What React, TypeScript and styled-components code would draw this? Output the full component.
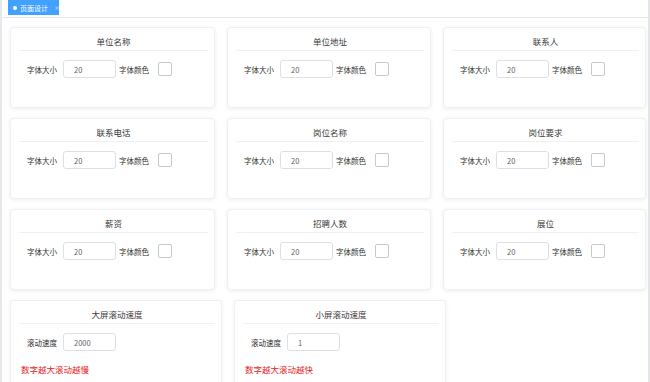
import styled, { createGlobalStyle } from 'styled-components';

const GlobalStyle = createGlobalStyle`
  * { box-sizing: border-box; }
  body {
    margin: 0;
    background: #fff;
    font-family: "Noto Sans CJK SC", "Noto Sans", sans-serif;
  }
`;

//Styled components
const Page = styled.div`
  width: 650px;
  height: 382px;
  overflow: hidden;
  border-left: 2px solid #e6e8eb;
  border-right: 2px solid #e3e5e8;
`;

const TabBar = styled.div`
  height: 18px;
  padding-left: 6px;
  border-bottom: 1px solid #e4e7ed;
  display: flex;
  align-items: flex-start;
`;

const Tab = styled.div`
  height: 15px;
  width: 51px;
  background: #42a0ff;
  color: #fff;
  font-size: 7px;
  white-space: nowrap;
  display: flex;
  align-items: center;
  padding-left: 5px;
  gap: 3px;

  i {
    width: 4px;
    height: 4px;
    border-radius: 50%;
    background: #fff;
    flex-shrink: 0;
  }

  b {
    font-weight: normal;
    margin-left: 3px;
    font-size: 6px;
    opacity: 0.8;
  }
`;

const Content = styled.div`
  padding: 9px 0 0 8px;
  display: flex;
  flex-direction: column;
  gap: 10px;
`;

const Grid = styled.div<{ $cols: string }>`
  display: grid;
  grid-template-columns: ${(p) => p.$cols};
  column-gap: 12px;
  row-gap: 10px;
`;

const Card = styled.div<{ $h: number }>`
  height: ${(p) => p.$h}px;
  background: #fff;
  border: 1px solid #eef0f4;
  border-radius: 4px;
  box-shadow: 0 1px 4px rgba(0, 0, 0, 0.07);
`;

const CardTitle = styled.div`
  margin: 0 6px 0 8px;
  height: 23px;
  border-bottom: 1px solid #eef0f3;
  display: flex;
  align-items: center;
  justify-content: center;
  font-size: 8.5px;
  color: #3a3a3a;
  padding-top: 3px;
`;

const FieldRow = styled.div`
  display: flex;
  align-items: center;
  padding: 9px 0 0 16px;
`;

const Label = styled.span`
  font-size: 7.5px;
  color: #333;
  width: 36px;
`;

const Input = styled.div`
  width: 53px;
  height: 18px;
  border: 1px solid #dcdfe6;
  border-radius: 3px;
  font-size: 7.5px;
  color: #606266;
  padding-left: 10px;
  display: flex;
  align-items: center;
`;

const ColorLabel = styled.span`
  font-size: 7.5px;
  color: #333;
  margin-left: 3px;
  width: 39px;
`;

const ColorBox = styled.div`
  width: 14px;
  height: 14px;
  border: 1px solid #c6c9cf;
  border-radius: 2px;
  background: #fff;
`;

const Hint = styled.div`
  color: #e62222;
  font-size: 8.5px;
  padding: 12px 0 0 10px;
`;

const fields = [
  '单位名称',
  '单位地址',
  '联系人',
  '联系电话',
  '岗位名称',
  '岗位要求',
  '薪资',
  '招聘人数',
  '展位',
];

const speeds = [
  { title: '大屏滚动速度', value: '2000', hint: '数字越大滚动越慢' },
  { title: '小屏滚动速度', value: '1', hint: '数字越大滚动越快' },
];

export default function App() {
  return (
    <>
      <GlobalStyle />
      <Page>
        <TabBar>
          <Tab>
            <i />
            页面设计
            <b>×</b>
          </Tab>
        </TabBar>
        <Content>
          <Grid $cols='205px 204px 203px'>
            {fields.map((f) => (
              <Card key={f} $h={81}>
                <CardTitle>{f}</CardTitle>
                <FieldRow>
                  <Label>字体大小</Label>
                  <Input>20</Input>
                  <ColorLabel>字体颜色</ColorLabel>
                  <ColorBox />
                </FieldRow>
              </Card>
            ))}
          </Grid>
          <Grid $cols='212px 212px'>
            {speeds.map((s) => (
              <Card key={s.title} $h={100}>
                <CardTitle>{s.title}</CardTitle>
                <FieldRow>
                  <Label>滚动速度</Label>
                  <Input>{s.value}</Input>
                </FieldRow>
                <Hint>{s.hint}</Hint>
              </Card>
            ))}
          </Grid>
        </Content>
      </Page>
    </>
  );
}
